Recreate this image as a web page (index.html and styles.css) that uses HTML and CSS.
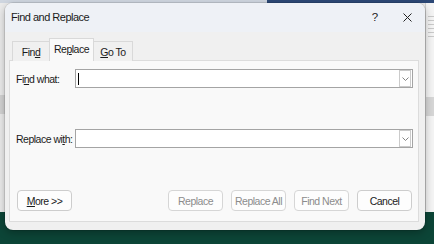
FILE: index.html
```html
<!DOCTYPE html>
<html>
<head>
<meta charset="utf-8">
<link rel="stylesheet" href="styles.css">
</head>
<body>
<div class="desktop">
  <div class="ruler"></div>
  <div class="dialog">
    <div class="titlebar">
      <div class="title">Find and Replace</div>
      <div class="caption-btn help">?</div>
      <div class="caption-btn close">
        <svg width="9" height="9" viewBox="0 0 9 9"><path d="M0.5 0.5 L8.5 8.5 M8.5 0.5 L0.5 8.5" stroke="#222" stroke-width="1" fill="none"/></svg>
      </div>
    </div>
    <div class="body">
      <div class="tabs">
        <div class="tab tab-find">Fin<u>d</u></div>
        <div class="tab tab-sel">Re<u>p</u>lace</div>
        <div class="tab tab-goto"><u>G</u>o To</div>
      </div>
      <div class="panel">
        <div class="row">
          <div class="label">Fi<u>n</u>d what:</div>
          <div class="combo">
            <div class="field"><span class="caret"></span></div>
            <div class="drop"><svg width="7" height="4" viewBox="0 0 7 4"><path d="M0.5 0.5 L3.5 3.5 L6.5 0.5" stroke="#777" stroke-width="0.9" fill="none"/></svg></div>
          </div>
        </div>
        <div class="row row-replace">
          <div class="label">Replace wi<u>t</u>h:</div>
          <div class="combo">
            <div class="field"></div>
            <div class="drop"><svg width="7" height="4" viewBox="0 0 7 4"><path d="M0.5 0.5 L3.5 3.5 L6.5 0.5" stroke="#777" stroke-width="0.9" fill="none"/></svg></div>
          </div>
        </div>
        <div class="buttons">
          <div class="btn btn-more"><u>M</u>ore &gt;&gt;</div>
          <div class="spacer"></div>
          <div class="btn disabled">Replace</div>
          <div class="btn disabled">Replace All</div>
          <div class="btn disabled">Find Next</div>
          <div class="btn">Cancel</div>
        </div>
      </div>
    </div>
  </div>
</div>
</body>
</html>
```
FILE: styles.css
```css
* { box-sizing: border-box; }
html, body { margin: 0; padding: 0; }
body {
  font-family: "Liberation Sans", Arial, sans-serif;
  font-size: 10.5px;
  letter-spacing: -0.5px;
  color: #1b1b1b;
}
u { text-decoration: underline; text-underline-offset: 1px; }
.desktop {
  position: relative;
  width: 434px;
  height: 244px;
  overflow: hidden;
  background:
    linear-gradient(#0c4537, #0c4537) left bottom / 100% 32px no-repeat,
    linear-gradient(to right, #cfd6e0 0, #cfd6e0 267px, #2c4876 267px) left top / 100% 3px no-repeat,
    linear-gradient(#d3d3d3, #d3d3d3) left 95px / 100% 19px no-repeat,
    #ebebeb;
}
.ruler {
  position: absolute;
  right: 0;
  top: 3px;
  width: 9px;
  height: 209px;
  background:
    repeating-linear-gradient(to bottom, #f4f4f4 0, #f4f4f4 3px, #c9c9c9 3px, #c9c9c9 4px) 2px 10px / 6px 26px no-repeat,
    linear-gradient(#d6d6d6, #d6d6d6) 0 94px / 100% 19px no-repeat,
    linear-gradient(#f4f4f4, #f4f4f4);
  border-left: 1px solid #d0d0d0;
}
.dialog {
  position: absolute;
  left: 5px;
  top: 3px;
  width: 420px;
  height: 227px;
  background: #f0f0f0;
  border-radius: 8px;
  overflow: hidden;
  box-shadow: 0 0 0 1px rgba(0,0,0,0.10), 0 3px 8px rgba(0,0,0,0.28);
  display: flex;
  flex-direction: column;
}
.titlebar {
  height: 29px;
  flex: none;
  background: #eef1f6;
  display: flex;
  align-items: center;
  padding: 0 2px 1px 6px;
}
.title {
  flex: 1;
  font-size: 11px;
  color: #1a1a1a;
}
.caption-btn {
  width: 32px;
  height: 28px;
  display: flex;
  align-items: center;
  justify-content: center;
  color: #222;
}
.help { font-size: 11.5px; letter-spacing: 0; }
.body {
  flex: 1;
  padding: 7px 6px 8px 4px;
  display: flex;
  flex-direction: column;
}
.tabs {
  display: flex;
  align-items: flex-end;
  height: 22px;
  padding-left: 3px;
  position: relative;
  z-index: 1;
  margin-bottom: -1px;
}
.tab {
  height: 20px;
  border: 1px solid #d9d9d9;
  border-bottom: none;
  background: #f0f0f0;
  display: flex;
  align-items: center;
  justify-content: center;
  padding-top: 1px;
  color: #1b1b1b;
}
.tab-find { width: 37px; border-right: none; }
.tab-goto { width: 39px; border-left: none; }
.tab-sel {
  width: 45px;
  height: 23px;
  background: #f9f9f9;
  padding-top: 0;
  padding-bottom: 2px;
}
.panel {
  flex: 1;
  background: #f9f9f9;
  border: 1px solid #dcdcdc;
  padding: 8px 5px 8px 6px;
  display: flex;
  flex-direction: column;
}
.row {
  display: flex;
  align-items: center;
  height: 19px;
}
.row-replace { margin-top: 41px; }
.label {
  width: 59px;
  flex: none;
  color: #1b1b1b;
}
.combo {
  flex: 1;
  height: 19px;
  background: #fff;
  border: 1px solid #a4a4a4;
  display: flex;
}
.field {
  flex: 1;
  display: flex;
  align-items: center;
  padding-left: 2px;
}
.caret {
  width: 1px;
  height: 12px;
  background: #000;
}
.drop {
  width: 12px;
  margin: 0 1px 0 0;
  border: 1px solid #cbcbcb;
  display: flex;
  align-items: center;
  justify-content: center;
  background: #fff;
}
.buttons {
  display: flex;
  margin-top: 42px;
  gap: 8px;
  padding-left: 1px;
  padding-right: 1px;
}
.spacer { flex: 1; }
.btn {
  width: 55px;
  height: 21px;
  border: 1px solid #cdcdcd;
  border-radius: 4px;
  background: #fdfdfd;
  display: flex;
  align-items: center;
  justify-content: center;
  color: #1b1b1b;
}
.btn.disabled { color: #8c8c8c; border-color: #d6d6d6; }
```
